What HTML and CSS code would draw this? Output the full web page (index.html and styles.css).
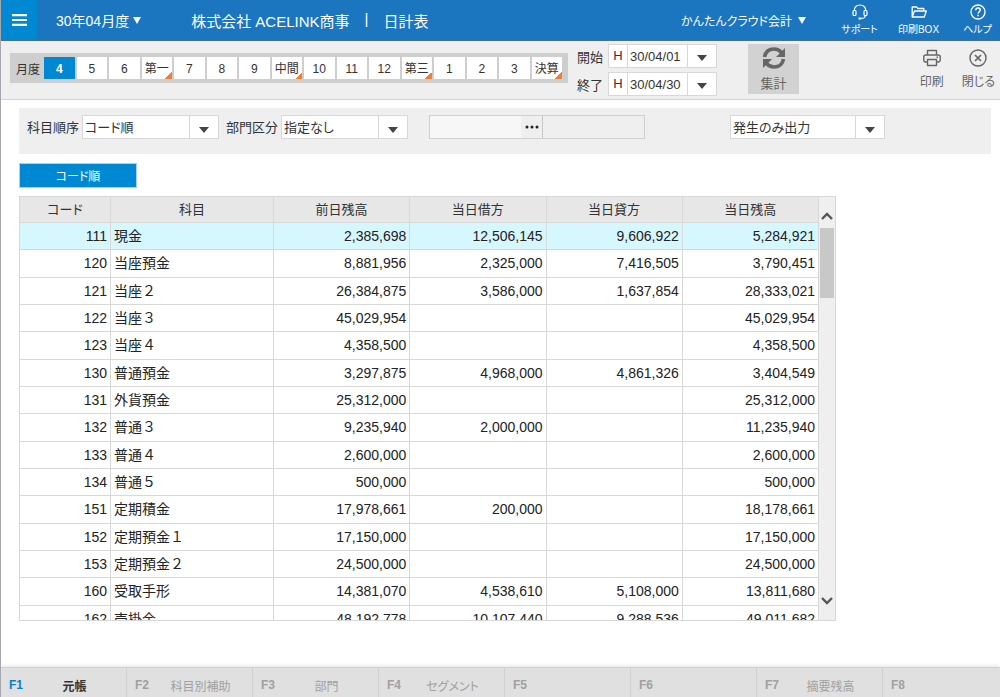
FILE: index.html
```html
<!DOCTYPE html>
<html lang="ja">
<head>
<meta charset="utf-8">
<meta name="viewport" content="width=device-width, initial-scale=1">
<title>日計表</title>
<link rel="stylesheet" href="styles.css">
</head>
<body>
<div class="app">
  <header class="topbar">
    <button class="menu-btn" type="button" aria-label="メニュー">
      <svg width="15" height="12" viewBox="0 0 15 12"><path d="M0 1.200h15M0 6h15M0 10.800h15" stroke="#fff" stroke-width="2.200"/></svg>
    </button>
    <button class="month-btn" type="button">30年04月度 <span class="caret"></span></button>
    <h1 class="title"><span>株式会社 ACELINK商事</span><span class="title-sep">|</span><span>日計表</span></h1>
    <button class="product-btn" type="button">かんたんクラウド会計 <span class="caret"></span></button>
    <nav class="top-links">
      <a class="top-link" href="#support">
        <svg width="16" height="16" viewBox="0 0 16 16" fill="none" stroke="#fff" stroke-width="1.2"><path d="M2.2 7C2.200 3 4.700 1 8 1s5.800 2 5.800 6M13.500 11.500c-.4 2-1.800 3-4 3"/><rect x="1" y="6.500" width="3" height="5" rx="1"/><rect x="12" y="6.500" width="3" height="5" rx="1"/><path d="M6.500 14.500h3" stroke-width="2"/></svg>
        <span>サポート</span>
      </a>
      <a class="top-link" href="#printbox">
        <svg width="16" height="16" viewBox="0 0 16 16" fill="none" stroke="#fff" stroke-width="1.3" stroke-linejoin="round"><path d="M1.200 13V3h4.600l1 1.500h6V7M1.200 13L3.500 7h11.800l-2 6z"/></svg>
        <span>印刷BOX</span>
      </a>
      <a class="top-link" href="#help">
        <svg width="16" height="16" viewBox="0 0 16 16" fill="none" stroke="#fff" stroke-width="1.3"><circle cx="8" cy="8" r="7"/><path d="M5.800 6.300c0-1.400 1-2.200 2.200-2.200s2.300.7 2.300 2c0 1.600-2.200 1.700-2.200 3.500M8.100 10.800v1.500" stroke-width="1.500"/></svg>
        <span>ヘルプ</span>
      </a>
    </nav>
  </header>

  <section class="toolbar">
    <div class="months">
      <span class="months-label">月度</span>
      <div class="months-grid">
        <button type="button" class="month active">4</button>
        <button type="button" class="month">5</button>
        <button type="button" class="month">6</button>
        <button type="button" class="month quarter">第一</button>
        <button type="button" class="month">7</button>
        <button type="button" class="month">8</button>
        <button type="button" class="month">9</button>
        <button type="button" class="month quarter">中間</button>
        <button type="button" class="month">10</button>
        <button type="button" class="month">11</button>
        <button type="button" class="month">12</button>
        <button type="button" class="month quarter">第三</button>
        <button type="button" class="month">1</button>
        <button type="button" class="month">2</button>
        <button type="button" class="month">3</button>
        <button type="button" class="month quarter">決算</button>
      </div>
    </div>
    <div class="period">
      <div class="period-row">
        <label for="from">開始</label>
        <div class="date"><span class="era">H</span><input id="from" type="text" value="30/04/01"><button type="button" aria-label="開始日を選択"><span class="caret dark"></span></button></div>
      </div>
      <div class="period-row">
        <label for="to">終了</label>
        <div class="date"><span class="era">H</span><input id="to" type="text" value="30/04/30"><button type="button" aria-label="終了日を選択"><span class="caret dark"></span></button></div>
      </div>
    </div>
    <button class="sum-btn" type="button">
      <svg width="24" height="24" viewBox="0 0 24 24"><g fill="none" stroke="#666" stroke-width="3.600"><path d="M2.500 11C3.500 5.500 7.500 3 12 3c3 0 5.500 1.200 7.500 3.500"/><path d="M21.500 13c-1 5.500-5 8-9.500 8-3 0-5.500-1.200-7.500-3.500"/></g><path d="M23 2v9h-9zM1 22v-9h9z" fill="#666"/></svg>
      <span>集計</span>
    </button>
    <div class="tools">
      <button class="tool" type="button">
        <svg width="18" height="18" viewBox="0 0 18 18" fill="none" stroke="#666" stroke-width="1.400" stroke-linejoin="round"><path d="M4.500 6V1.500h9V6M4.500 13H2.500Q.8 13 .8 11.300V8Q.8 6 2.800 6h12.400Q17.200 6 17.200 8v3.300Q17.200 13 15.500 13h-2"/><path d="M4.500 10.500h9v6h-9zM13.500 8.300h1.500"/></svg>
        <span>印刷</span>
      </button>
      <button class="tool" type="button">
        <svg width="18" height="18" viewBox="0 0 18 18" fill="none" stroke="#666" stroke-width="1.400"><circle cx="9" cy="9" r="8"/><path d="M6 6l6 6M12 6l-6 6" stroke-width="1.700"/></svg>
        <span>閉じる</span>
      </button>
    </div>
  </section>

  <main class="content">
    <form class="filters">
      <label for="order">科目順序</label>
      <span class="select order"><select id="order"><option>コード順</option></select></span>
      <label for="dept">部門区分</label>
      <span class="select dept"><select id="dept"><option>指定なし</option></select></span>
      <div class="lookup">
        <input type="text" aria-label="部門コード" disabled>
        <button type="button" aria-label="部門を検索"><svg width="14" height="4" viewBox="0 0 14 4" fill="#222"><circle cx="2" cy="2" r="1.500"/><circle cx="7" cy="2" r="1.500"/><circle cx="12" cy="2" r="1.500"/></svg></button>
        <output></output>
      </div>
      <span class="select output"><select aria-label="出力条件"><option>発生のみ出力</option></select></span>
    </form>

    <button class="tab" type="button">コード順</button>

    <div class="grid">
      <div class="grid-body">
        <table class="ledger">
          <colgroup><col class="c-code"><col class="c-name"><col><col><col><col></colgroup>
          <thead><tr><th>コード</th><th>科目</th><th>前日残高</th><th>当日借方</th><th>当日貸方</th><th>当日残高</th></tr></thead>
          <tbody>
            <tr class="selected"><td>111</td><td>現金</td><td>2,385,698</td><td>12,506,145</td><td>9,606,922</td><td>5,284,921</td></tr>
            <tr><td>120</td><td>当座預金</td><td>8,881,956</td><td>2,325,000</td><td>7,416,505</td><td>3,790,451</td></tr>
            <tr><td>121</td><td>当座２</td><td>26,384,875</td><td>3,586,000</td><td>1,637,854</td><td>28,333,021</td></tr>
            <tr><td>122</td><td>当座３</td><td>45,029,954</td><td></td><td></td><td>45,029,954</td></tr>
            <tr><td>123</td><td>当座４</td><td>4,358,500</td><td></td><td></td><td>4,358,500</td></tr>
            <tr><td>130</td><td>普通預金</td><td>3,297,875</td><td>4,968,000</td><td>4,861,326</td><td>3,404,549</td></tr>
            <tr><td>131</td><td>外貨預金</td><td>25,312,000</td><td></td><td></td><td>25,312,000</td></tr>
            <tr><td>132</td><td>普通３</td><td>9,235,940</td><td>2,000,000</td><td></td><td>11,235,940</td></tr>
            <tr><td>133</td><td>普通４</td><td>2,600,000</td><td></td><td></td><td>2,600,000</td></tr>
            <tr><td>134</td><td>普通５</td><td>500,000</td><td></td><td></td><td>500,000</td></tr>
            <tr><td>151</td><td>定期積金</td><td>17,978,661</td><td>200,000</td><td></td><td>18,178,661</td></tr>
            <tr><td>152</td><td>定期預金１</td><td>17,150,000</td><td></td><td></td><td>17,150,000</td></tr>
            <tr><td>153</td><td>定期預金２</td><td>24,500,000</td><td></td><td></td><td>24,500,000</td></tr>
            <tr><td>160</td><td>受取手形</td><td>14,381,070</td><td>4,538,610</td><td>5,108,000</td><td>13,811,680</td></tr>
            <tr><td>162</td><td>売掛金</td><td>48,192,778</td><td>10,107,440</td><td>9,288,536</td><td>49,011,682</td></tr>
          </tbody>
        </table>
      </div>
      <div class="scrollbar">
        <svg width="12" height="8" viewBox="0 0 12 8" fill="none" stroke="#555" stroke-width="2.400"><path d="M1 7l5-5 5 5"/></svg>
        <span class="thumb"></span>
        <svg width="12" height="8" viewBox="0 0 12 8" fill="none" stroke="#555" stroke-width="2.400"><path d="M1 1l5 5 5-5"/></svg>
      </div>
    </div>
  </main>

  <footer class="fkeys">
    <button type="button" class="fkey on"><b>F1</b><span>元帳</span></button>
    <button type="button" class="fkey"><b>F2</b><span>科目別補助</span></button>
    <button type="button" class="fkey"><b>F3</b><span>部門</span></button>
    <button type="button" class="fkey"><b>F4</b><span>セグメント</span></button>
    <button type="button" class="fkey"><b>F5</b><span></span></button>
    <button type="button" class="fkey"><b>F6</b><span></span></button>
    <button type="button" class="fkey"><b>F7</b><span>摘要残高</span></button>
    <button type="button" class="fkey"><b>F8</b><span></span></button>
  </footer>
</div>
</body>
</html>
```

FILE: styles.css
```css
* { box-sizing: border-box; }

body {
  margin: 0;
  background: #fff;
  color: #333;
  font-family: "Liberation Sans", "Noto Sans CJK JP", sans-serif;
  font-size: 13px;
  font-feature-settings: "palt";
}

button, input, select {
  margin: 0;
  padding: 0;
  border: 0;
  border-radius: 0;
  background: none;
  color: inherit;
  font: inherit;
  font-feature-settings: inherit;
}

svg { display: block; flex: none; }

.app {
  display: flex;
  flex-direction: column;
  height: 100vh;
  overflow: hidden;
  border-left: 1px solid #a6a6ae;
}

.caret {
  display: inline-block;
  border: 4px solid transparent;
  border-top: 7px solid #fff;
  border-bottom: 0;
}
.caret.dark { border-width: 6px 5px 0; border-top-color: #444; }

/* Top bar */
.topbar {
  display: flex;
  align-items: center;
  flex: none;
  height: 41px;
  background: #1c75bf;
  border-bottom: 1px solid #4a6f92;
  color: #fff;
  white-space: nowrap;
}
.menu-btn {
  display: flex;
  align-items: center;
  justify-content: center;
  width: 36px;
  height: 100%;
  background: #0089d2;
}
.month-btn {
  display: flex;
  align-items: center;
  gap: 4px;
  margin-left: 19px;
  font-size: 14px;
}
.title {
  display: flex;
  margin: 0 0 0 50px;
  font-size: 15px;
  font-weight: 400;
}
.title-sep { width: 34px; text-align: center; }
.product-btn {
  display: flex;
  align-items: center;
  gap: 6px;
  margin-left: auto;
  font-size: 12px;
}
.top-links { display: flex; margin-left: 24px; margin-right: -7px; }
.top-link {
  display: flex;
  flex-direction: column;
  align-items: center;
  gap: 3px;
  width: 59px;
  color: #fff;
  font-size: 10px;
  line-height: 14px;
  text-decoration: none;
}

/* Month and period toolbar */
.toolbar {
  display: flex;
  align-items: flex-start;
  flex: none;
  padding: 3px 5px 3px 9px;
  background: #efefef;
  border-bottom: 1px solid #d4d4d4;
  white-space: nowrap;
}
.months {
  display: flex;
  align-items: center;
  gap: 4px;
  width: 558px;
  height: 30px;
  margin-top: 9px;
  padding: 0 6px;
  background: #cecece;
}
.months-label { width: 24px; font-size: 12px; }
.months-grid {
  display: grid;
  grid-template-columns: repeat(16, 1fr);
  gap: 2px;
  flex: 1;
}
.month {
  height: 22px;
  background: #fff;
  font-size: 12px;
  line-height: 24px;
  text-align: center;
}
.month.active { background: #0089d2; color: #fff; font-weight: 700; }
.month.quarter { background: linear-gradient(135deg, transparent 50%, #f08030 50%) right bottom / 7px 7px no-repeat #fff; }

.period { display: flex; flex-direction: column; gap: 4px; margin-left: 9px; }
.period-row { display: flex; align-items: center; gap: 5px; }
.period-row label { width: 26px; }
.date {
  display: flex;
  height: 24px;
  border: 1px solid #d8d8d8;
  background: #fff;
}
.era { width: 19px; line-height: 22px; text-align: center; border-right: 1px solid #d8d8d8; }
.date input { width: 59px; padding-left: 2px; }
.date button { width: 29px; border-left: 1px solid #d8d8d8; }

.sum-btn {
  display: flex;
  flex-direction: column;
  align-items: center;
  gap: 5px;
  width: 51px;
  height: 50px;
  margin-left: 31px;
  padding-top: 2px;
  background: #d2d2d2;
  color: #666;
  line-height: 18px;
}
.tools { display: flex; gap: 18px; margin-left: auto; }
.tool {
  display: flex;
  flex-direction: column;
  align-items: center;
  gap: 7px;
  padding-top: 5px;
  color: #666;
  font-size: 12px;
  line-height: 16px;
}

/* Content */
.content { flex: 1; min-height: 0; padding: 8px 9px 0 18px; }
.filters {
  display: flex;
  align-items: flex-start;
  height: 46px;
  padding: 7px 8px;
  background: #efefef;
  white-space: nowrap;
}
.filters label { width: 51px; margin-right: 4px; line-height: 26px; }
.select { position: relative; height: 24px; background: #fff; border: 1px solid #d8d8d8; }
.select select { display: block; width: 100%; height: 100%; padding-left: 2px; appearance: none; }
.select::after {
  content: "";
  position: absolute;
  right: 9px;
  top: 11px;
  border: 5px solid transparent;
  border-top: 6px solid #444;
  border-bottom: 0;
  pointer-events: none;
}
.select::before {
  content: "";
  position: absolute;
  right: 28px;
  top: 0;
  bottom: 0;
  border-left: 1px solid #d8d8d8;
  pointer-events: none;
}
.order { width: 137px; margin-right: 7px; }
.dept { width: 127px; }
.output { width: 155px; margin-left: 85px; }
.lookup { display: flex; width: 216px; height: 24px; margin-left: 21px; border: 1px solid #d0d0d0; }
.lookup input { width: 91px; background: #f7f7f7; }
.lookup button { display: flex; justify-content: center; width: 22px; padding-top: 9px; border-right: 1px solid #c8c8c8; }
.lookup output { flex: 1; }

.tab {
  display: block;
  width: 118px;
  height: 25px;
  margin-top: 9px;
  background: #0089d2;
  border: 1px solid #a8cfe6;
  color: #fff;
  font-size: 12px;
}

.grid {
  display: flex;
  width: 817px;
  max-width: 100%;
  height: 425px;
  margin-top: 8px;
  border: 1px solid #d8d8d8;
}
.grid-body { flex: 1; min-width: 0; overflow: hidden; }
.ledger {
  width: 100%;
  height: 436px;
  border-collapse: separate;
  border-spacing: 0;
  table-layout: fixed;
  font-size: 14px;
  line-height: 20px;
  font-feature-settings: normal;
}
.c-code { width: 91px; }
.c-name { width: 163px; }
.ledger th, .ledger td {
  padding: 0 3px;
  border-right: 1px solid #d8d8d8;
  border-bottom: 1px solid #d8d8d8;
  text-align: right;
  white-space: nowrap;
}
.ledger th {
  height: 26px;
  background: #e7e7e7;
  font-size: 13px;
  font-weight: 400;
  font-feature-settings: "palt";
  text-align: center;
}
.ledger td { color: #222; }
.ledger td:nth-child(2) { text-align: left; }
.selected td { background: #d7f7ff; }

.scrollbar {
  display: flex;
  flex-direction: column;
  align-items: center;
  width: 16px;
  padding: 15px 0;
  background: #efefef;
}
.thumb { width: 14px; height: 70px; margin: 8px 0 auto; background: #c8c8c8; }

/* Function keys */
.fkeys {
  display: flex;
  flex: none;
  height: 30px;
  overflow: hidden;
  background: #e0e0e0;
  border-top: 1px solid #d0d0d0;
  box-shadow: 0 -1px 4px #e4e4e4;
}
.fkey {
  display: flex;
  flex: none;
  align-items: center;
  width: 126px;
  padding: 4px 0 0 8px;
  border-right: 1px solid #d0d0d0;
  color: #a0a0a0;
  font-size: 12px;
}
.fkey b { font-weight: 700; }
.fkey span { flex: 1; text-align: center; padding-top: 2px; }
.fkey.on { color: #333; font-weight: 700; }
.fkey.on b { color: #0b7fcb; }
```
